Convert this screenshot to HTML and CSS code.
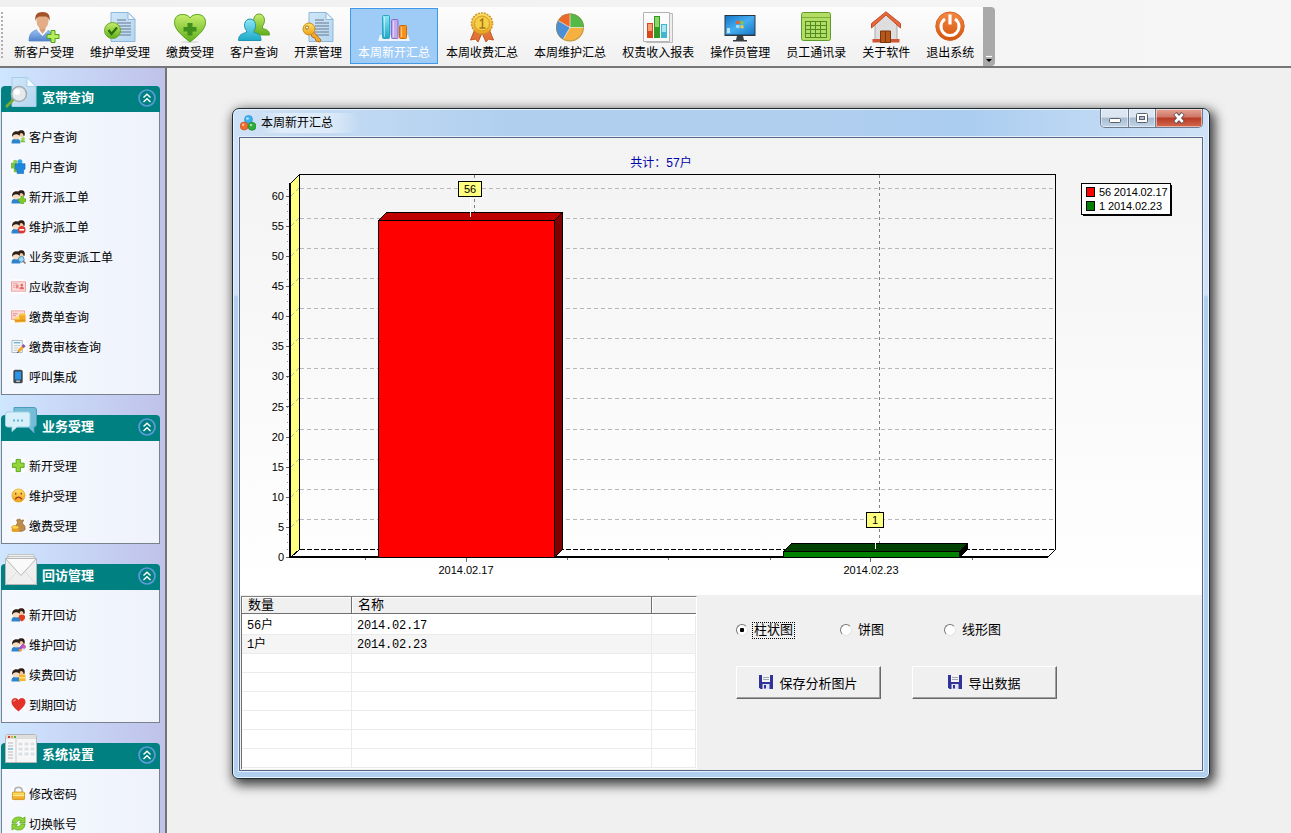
FILE: index.html
```html
<!DOCTYPE html>
<html lang="zh-CN">
<head>
<meta charset="utf-8">
<title>本周新开汇总</title>
<link rel="stylesheet" href="styles.css">
</head>
<body>
<svg class="defs" width="0" height="0" aria-hidden="true">
  <defs>
    <linearGradient id="gBlue" x1="0" y1="0" x2="0" y2="1"><stop offset="0" stop-color="#9ac0f0"/><stop offset="1" stop-color="#4f82cc"/></linearGradient>
    <linearGradient id="gGreen" x1="0" y1="0" x2="0" y2="1"><stop offset="0" stop-color="#c6ee6c"/><stop offset="1" stop-color="#5fae1c"/></linearGradient>
    <linearGradient id="gCyan" x1="0" y1="0" x2="0" y2="1"><stop offset="0" stop-color="#8ee6f6"/><stop offset="1" stop-color="#1ca9c8"/></linearGradient>
    <linearGradient id="gGold" x1="0" y1="0" x2="0" y2="1"><stop offset="0" stop-color="#ffe46a"/><stop offset="1" stop-color="#efa01a"/></linearGradient>
    <linearGradient id="gOrange" x1="0" y1="0" x2="0" y2="1"><stop offset="0" stop-color="#f58a45"/><stop offset="1" stop-color="#d4530b"/></linearGradient>
    <linearGradient id="gPaper" x1="0" y1="0" x2="1" y2="1"><stop offset="0" stop-color="#cfe6f8"/><stop offset="1" stop-color="#b4d6f0"/></linearGradient>
    <linearGradient id="gScreen" x1="0" y1="0" x2="1" y2="1"><stop offset="0" stop-color="#1576c8"/><stop offset=".5" stop-color="#46aef0"/><stop offset="1" stop-color="#1576c8"/></linearGradient>
    <symbol id="doc" viewBox="0 0 32 32">
      <path d="M7 1.500h17l7 7v22H7z" fill="url(#gPaper)" stroke="#8fb7dc"/>
      <path d="M24 1.500v7h7z" fill="#f2f8fd" stroke="#8fb7dc"/>
      <path d="M13 9h9M13 12h14M13 15h14M13 18h14M13 21h14M13 24h14" stroke="#8799ae" stroke-width="1.300"/>
    </symbol>
    <symbol id="people" viewBox="0 0 16 16">
      <circle cx="10.800" cy="5.300" r="3.200" fill="#f0c9a2"/>
      <path d="M7 7c-.5-4 1.500-6 4-5.700 2.800-.4 4.300 2 3.500 5.700l-1 1c0-2-.6-3.200-2.500-3.700C10 4.600 8.500 5 7 7z" fill="#2c1d17"/>
      <path d="M.5 15.500c0-4 1.500-5 4.700-5s4.800 1 4.800 5z" fill="#2e83cf"/>
      <path d="M10 14.500c0-2-.5-3.500-1.500-4.500 2.500-1.200 6.500-.5 7 4.500z" fill="#d8e4f0"/>
      <circle cx="5.500" cy="7.500" r="3.700" fill="#f7dcc0"/>
      <path d="M1.300 8.500C.7 5 2.500 2.500 5.800 2.500c3 0 4.200 2 3.600 4.800C7.600 6 6 5.500 4.500 5.800 2.600 6 2.200 6.800 1.300 8.500z" fill="#2c1d17"/>
    </symbol>
    <symbol id="chev" viewBox="0 0 18 18">
      <circle cx="9" cy="9" r="8" fill="none" stroke="#5a9bd8" stroke-width="1.700"/>
      <path d="M5.500 8.500L9 5.200l3.500 3.300M5.500 13L9 9.700l3.500 3.300" fill="none" stroke="#fff" stroke-width="1.400"/>
    </symbol>
    <symbol id="disk" viewBox="0 0 14 14">
      <path d="M0 0h14v14H1.500L0 12.500z" fill="#32329b"/>
      <path d="M3 0h8v7H3z" fill="#f3f3f3"/><path d="M4 2.500h6M4 4.500h6" stroke="#9ea6b0"/>
      <path d="M3.500 9h7v5h-7z" fill="#dfe3ef"/><path d="M5 10h2v3.500H5z" fill="#32329b"/>
    </symbol>
  </defs>
</svg>

<header class="topbar">
  <nav class="toolbar">
    <span class="grip"></span>
    <a class="tool"><svg viewBox="0 0 32 32">
      <path d="M1 30c0-7 3-10 8-11h9c5 1 7 4 7 11z" fill="url(#gBlue)" stroke="#5a87c4" stroke-width=".8"/>
      <path d="M9 19l5.500 6 5.500-6-2-3h-7z" fill="#fff"/><path d="M11.500 14h6v5l-3 4-3-4z" fill="#d9a07a"/>
      <ellipse cx="14.500" cy="10" rx="6" ry="8" fill="#e3ad88"/>
      <path d="M7.500 10C6.500 4 9 1 14.500 1s8 3 7 9c-1-3-2-4-3.500-4.500h-7C9 6 8 8 7.500 10z" fill="#a3512a"/>
      <path d="M23 19.500h4v4h4v4h-4v4h-4v-4h-4v-4h4z" fill="#b7ec5c" stroke="#4da31b"/>
    </svg>新客户受理</a>
    <a class="tool"><svg viewBox="0 0 32 32"><use href="#doc"/><circle cx="8.500" cy="19.500" r="8" fill="url(#gGreen)" stroke="#6aa82a"/><path d="M4.500 19l3 4 5.500-6.500" fill="none" stroke="#2d6d0c" stroke-width="2.200"/></svg>维护单受理</a>
    <a class="tool"><svg viewBox="0 0 32 32"><ellipse cx="16" cy="31" rx="9" ry="1" fill="#ddd"/><path d="M16 31C7 24 .5 18 .5 11.500.5 6 4 3.500 8.500 3.500c3.500 0 6 1 7.500 3.500 1.500-2.500 4-3.500 7.500-3.500 4.500 0 8 2.500 8 8C31.500 18 25 24 16 31z" fill="url(#gGreen)" stroke="#59a51d"/><path d="M13.500 12h5v4h4v4.500h-4v4h-5v-4h-4V16h4z" fill="#3f8f1b"/></svg>缴费受理</a>
    <a class="tool"><svg viewBox="0 0 32 32"><path d="M13 24c0-5 3-6 5-7-4-5-3-14 3-14s7 8 3.500 12v2.500c4 1 7 2 7 6.500z" fill="url(#gGreen)" stroke="#62a128"/><path d="M.5 29.500c0-6 4-7 8-8v-2C5 16 6 8 12 8s7 8 4 11.500v2c4 1 7 2 7 8z" fill="url(#gCyan)" stroke="#2494b4"/></svg>客户查询</a>
    <a class="tool"><svg viewBox="0 0 32 32"><use href="#doc"/><path d="M9 18l10 11-1 2-4-1-1-3-3-1-1-3-4-3z" fill="#f2a72e" stroke="#b9741a"/><circle cx="7" cy="18" r="6" fill="url(#gGold)" stroke="#c98a20"/><circle cx="5" cy="16.500" r="1.600" fill="#fff" stroke="#a86b16"/></svg>开票管理</a>
    <a class="tool tool-active"><svg viewBox="0 0 32 32"><path d="M2 24l-2 6h32l-2-6z" fill="#eef3f8"/><rect x="4.500" y="4.500" width="7" height="23" rx="1" fill="url(#gCyan)" stroke="#2fa5bd"/><rect x="13.500" y="8.500" width="6.500" height="19" rx="1" fill="#c3a8ec" stroke="#8c6cc8"/><rect x="21.500" y="14.500" width="7" height="13" rx="1" fill="#f8921c" stroke="#cc6a08"/><path d="M6.500 6v20M15.500 10v16M23.500 16v10" stroke="#fff" stroke-opacity=".5"/></svg>本周新开汇总</a>
    <a class="tool"><svg viewBox="0 0 32 32"><path d="M9 18L4.500 29l5-1 2.500 3 4-9 4 9 2.500-3 5 1L23 18z" fill="#e2713a" stroke="#c05522"/><circle cx="16" cy="12.500" r="10.500" fill="url(#gGold)" stroke="#c9962a" stroke-width="1.600" stroke-dasharray="2 1"/><circle cx="16" cy="12.500" r="7.500" fill="#f5cf45" stroke="#d19a22"/><path d="M14 10l2.500-2v9M13.500 17h6" fill="none" stroke="#a5741a" stroke-width="1.500"/></svg>本周收费汇总</a>
    <a class="tool"><svg viewBox="0 0 32 32"><circle cx="16" cy="16.500" r="14" fill="#f5b040"/><path d="M16 16.500L9 28.600A14 14 0 0 1 4 9.500z" fill="#4a8fd8"/><path d="M16 16.500L4 9.500A14 14 0 0 1 16 2.500z" fill="#ef6a2a"/><path d="M16 16.500v-14a14 14 0 0 1 14 14z" fill="#55b948"/><path d="M16 2.500v14h14M16 16.500L4 9.500M16 16.500L9 28.600" fill="none" stroke="#fff" stroke-opacity=".6"/><circle cx="16" cy="16.500" r="13.500" fill="none" stroke="#8a8a60" stroke-opacity=".6"/></svg>本周维护汇总</a>
    <a class="tool"><svg viewBox="0 0 32 32"><path d="M4.500 2.500h26v29h-26z" fill="#eee" stroke="#bbb"/><path d="M1.500 1.500h26v29h-26z" fill="#fbfbfb" stroke="#b4b4b4"/><rect x="5" y="12" width="6" height="15" fill="#d8481c"/><rect x="6" y="13" width="4" height="7" fill="#f4a074"/><rect x="12" y="5" width="6" height="22" fill="#319a23"/><rect x="13" y="6" width="4" height="10" fill="#8fd56c"/><rect x="19" y="13" width="6" height="14" fill="#3fb8cf"/><rect x="20" y="14" width="4" height="7" fill="#a8e6f0"/></svg>权责收入报表</a>
    <a class="tool"><svg viewBox="0 0 32 32"><path d="M13 25h6l1 4h3v1.500H9V29h3z" fill="#3a3f44"/><rect x=".5" y="4" width="31" height="21" fill="#283844"/><rect x="1.500" y="5" width="29" height="18.500" fill="url(#gScreen)"/><path d="M12 10.500l3.500-1V13H12z" fill="#f0602c"/><path d="M16.500 9.500l3 1v3l-3-.5z" fill="#8ac43c"/><path d="M12 14h3.500v3.500l-3.500-1z" fill="#a5dcff"/><path d="M16.500 14l3 .5v3l-3-.5z" fill="#f8d030"/><path d="M3 17h3v5H3z" fill="#b8e4f8"/></svg>操作员管理</a>
    <a class="tool"><svg viewBox="0 0 32 32"><rect x="1.500" y="1.500" width="29" height="28" rx="2" fill="#b2dc64" stroke="#5d9c26"/><path d="M2 6.500h28" stroke="#78b23a"/><path d="M5 10.500h22M5 14.500h22M5 18.500h22M5 22.500h22M5 26.500h22M5.500 10v17M10.500 10v17M15.500 10v17M20.500 10v17M26.500 10v17" stroke="#4c8a22"/></svg>员工通讯录</a>
    <a class="tool"><svg viewBox="0 0 32 32"><path d="M5 13L16 3l11 11v15H5z" fill="#dedede" stroke="#aaa"/><path d="M2.500 28h27v3.500h-27z" fill="#cf5634"/><path d="M10.500 20h10v11.500h-10z" fill="#b5561b" stroke="#7c350c"/><path d="M15.500 20v11" stroke="#7c350c"/><path d="M1.500 17L16 4l14.500 13v-4.500L16 .8 1.500 12.500z" fill="#e8683a" stroke="#c04c28"/></svg>关于软件</a>
    <a class="tool"><svg viewBox="0 0 32 32"><circle cx="16" cy="15.200" r="14.200" fill="url(#gOrange)" stroke="#d8631f"/><path d="M11 8A9 9 0 1 0 21 8" fill="none" stroke="#fff" stroke-width="3"/><path d="M16 3.500v10" stroke="#fff" stroke-width="3.200"/></svg>退出系统</a>
    <span class="overflow"><svg viewBox="0 0 8 8"><path d="M1 1.500h6" stroke="#fff" stroke-width="1.200"/><path d="M1 4h6L4 7z" fill="#000"/></svg></span>
  </nav>
</header>

<div class="workspace">
  <aside class="sidebar">
    <section class="group">
      <h2 class="group-head"><svg class="group-icon" viewBox="0 0 32 32"><path d="M7 1.500h15l9 9v20H7z" fill="url(#gPaper)" stroke="#a8cdea"/><path d="M22 1.500v9h9z" fill="#f4fafe" stroke="#a8cdea"/><path d="M9 23L1 31" stroke="#7bab2c" stroke-width="2.600"/><circle cx="14" cy="18" r="7.500" fill="#e6eaee" stroke="#a7adb2" stroke-width="1.600"/><circle cx="12" cy="16" r="3" fill="#fff"/></svg>宽带查询<svg class="chev"><use href="#chev"/></svg></h2>
      <ul class="group-body">
        <li><svg viewBox="0 0 16 16"><use href="#people"/><path d="M10 14c0-3 4-3 5.500 0z" fill="#7cc332"/><circle cx="12.800" cy="10.500" r="2" fill="#9bd84c"/></svg>客户查询</li>
        <li><svg viewBox="0 0 16 16"><path d="M0 4h6l1 10H3v-4H0z" fill="#79c33c"/><circle cx="4.500" cy="3" r="2.300" fill="#8fd14e"/><circle cx="9.500" cy="3" r="2.700" fill="#35a4ee"/><path d="M4.500 5H15v6h-1.500v4.500H6.500V11h-2z" fill="#1e88de" stroke="#1266b0" stroke-width=".6"/></svg>用户查询</li>
        <li><svg viewBox="0 0 16 16"><use href="#people"/><path d="M10.500 8h3v2.500H16v3h-2.500V16h-3v-2.500H8v-3h2.500z" fill="#84cc28" stroke="#4f9c14" stroke-width=".6"/></svg>新开派工单</li>
        <li><svg viewBox="0 0 16 16"><use href="#people"/><circle cx="11.500" cy="11.500" r="4" fill="#e0382c"/><path d="M9 11.500h5" stroke="#fff" stroke-width="1.700"/></svg>维护派工单</li>
        <li><svg viewBox="0 0 16 16"><use href="#people"/><path d="M13 13l2.500 2.500" stroke="#8a6a40" stroke-width="1.500"/><circle cx="11" cy="11" r="3" fill="#9bd8f6" stroke="#4b87b0"/></svg>业务变更派工单</li>
        <li><svg viewBox="0 0 16 16"><rect x=".5" y="3" width="15" height="10" fill="#fbdcdc" stroke="#eba3a0"/><rect x="5" y="6" width="3" height="4" fill="#e88684"/><circle cx="11.500" cy="6.500" r="1.500" fill="#e26a68"/><path d="M9 11c0-4 5-4 5 0z" fill="#e26a68"/><path d="M2 5h5M2 7h2M2 9h2" stroke="#e9a2a0"/></svg>应收款查询</li>
        <li><svg viewBox="0 0 16 16"><rect x=".5" y="2" width="14" height="9" fill="#fbdcdc" stroke="#eba3a0"/><path d="M2 5h5M2 7h3" stroke="#e08886"/><ellipse cx="12" cy="6.500" rx="3.500" ry="2" fill="#fbc740"/><path d="M8.500 7h7v7h-7zM4 10h5v4.500H4z" fill="#f3a925"/><ellipse cx="6.500" cy="10" rx="3" ry="1.500" fill="#ffd85e"/><path d="M4 12h11.500" stroke="#c87c12" stroke-width=".7"/></svg>缴费单查询</li>
        <li><svg viewBox="0 0 16 16"><path d="M1 1.500h11v13H1z" fill="#f5f8fb" stroke="#a9b2bc"/><path d="M3 4h7" stroke="#5aabd2" stroke-width="1.300"/><path d="M3 7h7M3 9.500h5M3 12h4" stroke="#bcc6cf"/><path d="M8 13l5-5" stroke="#f6a623" stroke-width="3"/><path d="M12.500 8.500l2-2" stroke="#8a4fc0" stroke-width="3.200"/><path d="M6.500 14.500l2-1" stroke="#333"/></svg>缴费审核查询</li>
        <li><svg viewBox="0 0 16 16"><rect x="2.500" y=".8" width="10" height="14.400" rx="2" fill="#3e4c58"/><rect x="4.300" y="2.800" width="6.400" height="8.400" fill="#2a94e6"/><path d="M5.500 13h4" stroke="#cdd6de" stroke-width="1.400"/></svg>呼叫集成</li>
      </ul>
    </section>
    <section class="group">
      <h2 class="group-head"><svg class="group-icon" viewBox="0 0 32 32"><path d="M9 2.500h20q2.500 0 2.500 2.500v14q0 3-2.500 3v6l-6-6H12q-3 0-3-3V4z" fill="#74bdd9" stroke="#4c9dbd"/><path d="M3 7h20q2 0 2 2v11q0 2-2 2H12l-5 4.500V22H3q-2.500 0-2.500-2V9q0-2 2.500-2z" fill="#d8f0fa" stroke="#a0d0e4"/><path d="M8 15.500h2M12 15.500h2M16 15.500h2" stroke="#68b4d4" stroke-width="2"/></svg>业务受理<svg class="chev"><use href="#chev"/></svg></h2>
      <ul class="group-body">
        <li><svg viewBox="0 0 16 16"><path d="M5.500 1.500h4.500v4h4v4.500h-4v4.500H5.500V10h-4V5.500h4z" fill="#94d63a" stroke="#56a41a"/></svg>新开受理</li>
        <li><svg viewBox="0 0 16 16"><circle cx="8" cy="8" r="7" fill="url(#gGold)" stroke="#dc981c" stroke-width=".7"/><path d="M5 5v2M11 5v2M4.500 12q3.500-4.500 7 0" fill="none" stroke="#a8361c" stroke-width="1.500"/></svg>维护受理</li>
        <li><svg viewBox="0 0 16 16"><path d="M7 5l-1-3 3-1 2 1.500L13.500 2 12 5.500q4 3 3 7-3 3-9 1-2-5 1-8.500z" fill="#c08c4c" stroke="#8c6330" stroke-width=".7"/><ellipse cx="4.500" cy="13" rx="4" ry="2" fill="#e9a21e"/><ellipse cx="4.500" cy="10" rx="4" ry="2" fill="#ffd34e" stroke="#c98a16" stroke-width=".7"/></svg>缴费受理</li>
      </ul>
    </section>
    <section class="group">
      <h2 class="group-head"><svg class="group-icon" viewBox="0 0 32 32"><path d="M3 .5h26v8H3zM2 2.500h28v8H2z" fill="#f2f2f2" stroke="#c4c4c4"/><path d="M.5 4.500h31v26H.500z" fill="#eeefee" stroke="#b6b6b6"/><path d="M.5 30.500L12 17.500M31.500 30.500L20 17.500" stroke="#ddd"/><path d="M.5 4.500l15.500 17 15.500-17z" fill="#fafafa" stroke="#b6b6b6"/></svg>回访管理<svg class="chev"><use href="#chev"/></svg></h2>
      <ul class="group-body">
        <li><svg viewBox="0 0 16 16"><use href="#people"/><path d="M11.500 15.500C7.500 13 7 7.500 11.500 8.500c4.500-1.500 5 4.500 0 7z" fill="#e23c1c"/></svg>新开回访</li>
        <li><svg viewBox="0 0 16 16"><use href="#people"/><path d="M9 13l5-5" stroke="#9c4cc0" stroke-width="3"/><circle cx="14" cy="10.500" r="2" fill="#d058b4"/><circle cx="10" cy="14" r="1.500" fill="#f09a28"/></svg>维护回访</li>
        <li><svg viewBox="0 0 16 16"><use href="#people"/><rect x="8.500" y="8" width="7" height="7" fill="#f7b52c"/><path d="M8.500 11.500h7" stroke="#fff0b0"/></svg>续费回访</li>
        <li><svg viewBox="0 0 16 16"><path d="M8 15.500C3 11 .5 8.500.5 5 .5 2.500 2.500 1 4.500 1 6.200 1 7.400 2 8 3.400 8.600 2 9.800 1 11.500 1c2 0 4 1.500 4 4 0 3.500-2.500 6-7.500 10.500z" fill="#e3322a"/><path d="M3 5q0-2 2-2" stroke="#fba39c" fill="none" stroke-width="1.200"/></svg>到期回访</li>
      </ul>
    </section>
    <section class="group">
      <h2 class="group-head"><svg class="group-icon" viewBox="0 0 32 32"><path d="M.5 3.500q0-2 2-2h27q2 0 2 2v26H.5z" fill="#f6f6f6" stroke="#b6b6b6"/><path d="M1 2h30v4H1z" fill="#dedede"/><path d="M3 4h2" stroke="#d43c2c" stroke-width="2"/><path d="M6 4h2" stroke="#e8a528" stroke-width="2"/><path d="M9 4h2" stroke="#5cb43c" stroke-width="2"/><path d="M11 6v23" stroke="#ccc"/><path d="M3 10h5M3 13h5M3 19h5M3 22h5M3 25h5" stroke="#b4bcc2"/><path d="M3 16h5" stroke="#3a9cc8"/><path d="M13 9h5v4h-5zM19 9h5v4h-5zM25 9h5v4h-5zM13 14h5v4h-5zM19 14h5v4h-5zM25 14h5v4h-5zM13 19h5v4h-5zM19 19h5v4h-5zM25 19h5v4h-5z" fill="#dce0e4" stroke="#fff" stroke-width=".8"/></svg>系统设置<svg class="chev"><use href="#chev"/></svg></h2>
      <ul class="group-body">
        <li><svg viewBox="0 0 16 16"><path d="M4 8V5q0-3.500 4-3.500T12 5v3" fill="none" stroke="#b4b4b4" stroke-width="1.700"/><rect x="1.500" y="6.500" width="13" height="8" rx="1" fill="url(#gGold)" stroke="#d0931c"/><path d="M2 10h12" stroke="#fff1a8"/></svg>修改密码</li>
        <li><svg viewBox="0 0 16 16"><path d="M1 7.500Q1.500 1 8 1q3 0 4.500 1.500L15 1v6.500H9L11 5Q7.500 3.500 5 7.500z" fill="#8ed436" stroke="#4c9c18" stroke-width=".7"/><path d="M15 8.500Q14.500 15 8 15q-3 0-4.500-1.500L1 15V8.500h6L5 11q3.500 1.500 6-2.500z" fill="#8ed436" stroke="#4c9c18" stroke-width=".7"/></svg>切换帐号</li>
      </ul>
    </section>
  </aside>

  <main class="desktop">
    <div class="window">
      <div class="titlebar">
        <svg class="app-icon" viewBox="0 0 16 16"><circle cx="8.500" cy="4.500" r="4" fill="#3fb0ee" stroke="#1c86c8" stroke-width=".6"/><circle cx="4.200" cy="11" r="4" fill="#ee6c34" stroke="#c04818" stroke-width=".6"/><circle cx="12" cy="11.300" r="4" fill="#2fae3c" stroke="#147c20" stroke-width=".6"/><circle cx="7.500" cy="3.500" r="1.300" fill="#b8e6fb"/><circle cx="3.200" cy="9.800" r="1.200" fill="#fcc0a0"/><circle cx="11" cy="10" r="1.200" fill="#a5e2a4"/></svg>
        <span class="title">本周新开汇总</span>
        <div class="controls">
          <span class="ctl ctl-min"><svg viewBox="0 0 14 12"><rect x="1.500" y="6.500" width="11" height="4" rx="1" fill="#fff" stroke="#59616e"/></svg></span>
          <span class="ctl ctl-max"><svg viewBox="0 0 14 12"><rect x="1.500" y="1.500" width="11" height="9" rx="1" fill="#fff" stroke="#59616e"/><rect x="4.500" y="4.500" width="5" height="3" fill="#aebccf" stroke="#59616e"/></svg></span>
          <span class="ctl ctl-close"><svg viewBox="0 0 14 12"><path d="M3 1.500l8 9M11 1.500l-8 9" stroke="#5c4a50" stroke-width="4.500"/><path d="M3.300 2l7.400 8M10.700 2l-7.400 8" stroke="#fff" stroke-width="2.600"/></svg></span>
        </div>
      </div>
      <div class="client">
        <svg class="chart" viewBox="240 138 962 457">
          <text x="661" y="167" class="chart-title" text-anchor="middle">共计：57户</text>
          <!-- walls and floor -->
          <path d="M290 557L299.500 549.500H1055.500L1048 557z" fill="#fff"/>
          <path d="M290.500 183.500L299.500 174.500V549.500L290.500 557.500z" fill="#ffff80" stroke="#000"/>
          <path d="M299.500 174.500H1055.500V549.500L1048 557" fill="none" stroke="#000"/>
          <path d="M300 549.500H1055" stroke="#000" stroke-dasharray="5 2"/>
          <path class="grid" d="M300 188.500H1055M300 218.500H1055M300 248.500H1055M300 278.500H1055M300 308.500H1055M300 338.500H1055M300 368.500H1055M300 398.500H1055M300 429.500H1055M300 459.500H1055M300 489.500H1055M300 519.500H1055"/>
          <path class="grid" d="M291 196l8-8M291 226l8-8M291 256l8-8M291 286l8-8M291 316l8-8M291 346l8-8M291 376l8-8M291 406l8-8M291 437l8-8M291 467l8-8M291 497l8-8M291 527l8-8"/>
          <path d="M474.500 175V549M879.500 175V549" stroke="#808080" stroke-dasharray="3 3"/>
          <!-- axes -->
          <path d="M290 183V558M289 557H1048" stroke="#000" stroke-width="2"/>
          <path d="M287.500 188.500V557" stroke="#909090" stroke-dasharray="1 6.520"/>
          <path d="M286 196.500h3M286 226.500h3M286 256.500h3M286 286.500h3M286 316.500h3M286 346.500h3M286 376.500h3M286 406.500h3M286 437.500h3M286 467.500h3M286 497.500h3M286 527.500h3M286 557.500h3" stroke="#606060"/>
          <path d="M466.500 558v4M870.500 558v4M365.500 558v2M567.500 558v2M668.500 558v2M770.500 558v2M972.500 558v2" stroke="#707070"/>
          <g class="axis" text-anchor="end">
            <text x="284" y="200">60</text><text x="284" y="230">55</text><text x="284" y="260">50</text><text x="284" y="290">45</text><text x="284" y="320">40</text><text x="284" y="350">35</text><text x="284" y="380">30</text><text x="284" y="411">25</text><text x="284" y="441">20</text><text x="284" y="471">15</text><text x="284" y="501">10</text><text x="284" y="531">5</text><text x="284" y="561">0</text>
          </g>
          <!-- bars -->
          <g stroke="#000">
            <path d="M378.500 220.500l8-8H562.500l-8 8z" fill="#bf0000"/>
            <path d="M554.500 220.500l8-8V549.500l-8 8z" fill="#800000"/>
            <path d="M378.500 220.500H554.500V557.500H378.500z" fill="#f00"/>
            <path d="M783.500 551.500l8-8H967.500l-8 8z" fill="#004000"/>
            <path d="M959.500 551.500l8-8v6l-8 8z" fill="#000"/>
            <path d="M783.500 551.500H959.500V557.500H783.500z" fill="#008000"/>
          </g>
          <path d="M470.500 197V217M875.500 543V549" stroke="#fff"/>
          <g fill="#ffff80" stroke="#000"><rect x="458.500" y="181.500" width="23" height="15"/><rect x="866.500" y="512.500" width="17" height="15"/></g>
          <g class="axis" text-anchor="middle">
            <text x="470" y="193">56</text><text x="875" y="524">1</text>
            <text x="466" y="574">2014.02.17</text><text x="871" y="574">2014.02.23</text>
          </g>
          <!-- legend -->
          <rect x="1083" y="185" width="89" height="31" fill="#000"/>
          <rect x="1081.500" y="183.500" width="89" height="31" fill="#fff" stroke="#000"/>
          <rect x="1086.500" y="187.500" width="8" height="9" fill="#f00" stroke="#000"/>
          <rect x="1086.500" y="201.500" width="8" height="9" fill="#008000" stroke="#000"/>
          <text class="axis" x="1099" y="196" textLength="68.500">56 2014.02.17</text>
          <text class="axis" x="1099" y="210" textLength="63">1 2014.02.23</text>
        </svg>
        <div class="lower">
          <div class="table">
            <div class="thead"><span>数量</span><span>名称</span><span></span></div>
            <div class="trow"><span>56户</span><span>2014.02.17</span><span></span></div>
            <div class="trow trow-alt"><span>1户</span><span>2014.02.23</span><span></span></div>
            <div class="trow"><span></span><span></span><span></span></div>
            <div class="trow"><span></span><span></span><span></span></div>
            <div class="trow"><span></span><span></span><span></span></div>
            <div class="trow"><span></span><span></span><span></span></div>
            <div class="trow"><span></span><span></span><span></span></div>
            <div class="trow"><span></span><span></span><span></span></div>
          </div>
          <div class="options">
            <div class="radios">
              <label class="radio radio-on"><i></i><span>柱状图</span></label>
              <label class="radio"><i></i><span>饼图</span></label>
              <label class="radio"><i></i><span>线形图</span></label>
            </div>
            <div class="buttons">
              <button class="btn"><svg><use href="#disk"/></svg>保存分析图片</button>
              <button class="btn"><svg><use href="#disk"/></svg>导出数据</button>
            </div>
          </div>
        </div>
      </div>
    </div>
  </main>
</div>
</body>
</html>
```
FILE: styles.css
```css
* { box-sizing: border-box; }
body {
  margin: 0;
  width: 1291px;
  height: 833px;
  overflow: hidden;
  display: flex;
  flex-direction: column;
  background: #f0f0f0;
  color: #000;
  font: 12px "Liberation Sans", "Noto Sans CJK SC", sans-serif;
}
.defs { position: absolute; }

/* top toolbar */
.topbar {
  height: 68px;
  flex: none;
  padding-top: 7px;
  background: linear-gradient(90deg, #f0f0f0, #f6f6f6);
  border-bottom: 2px solid #767676;
}
.toolbar {
  display: flex;
  width: 995px;
  height: 59px;
  padding-top: 1px;
  background: linear-gradient(#fdfdfd, #f0f0f0);
  border-radius: 0 4px 4px 0;
}
.grip {
  width: 2px;
  height: 48px;
  margin: 4px 3px 0 1px;
  background: repeating-linear-gradient(#b0b0b0 0 2px, transparent 2px 4px);
}
.tool {
  flex: none;
  height: 56px;
  padding: 2px 7px 0;
  border: 1px solid transparent;
  display: flex;
  flex-direction: column;
  align-items: center;
  line-height: 20px;
  white-space: nowrap;
}
.tool svg { width: 32px; height: 32px; }
.tool-active { background: #9fccf7; border-color: #3f98e8; color: #fff; }
.overflow {
  width: 12px;
  height: 59px;
  margin: -1px 0 0 auto;
  background: #a9a9a9;
  border-radius: 0 4px 4px 0;
  display: flex;
  align-items: flex-end;
  justify-content: center;
  padding-bottom: 3px;
}
.overflow svg { width: 8px; height: 8px; }

/* sidebar */
.workspace { flex: 1; display: flex; min-height: 0; }
.sidebar {
  width: 167px;
  flex: none;
  padding: 18px 5px 0 1px;
  border-right: 2px solid #747474;
  background: linear-gradient(90deg, #cfe6ff, #bfc2ea);
  display: flex;
  flex-direction: column;
  gap: 20px;
  overflow: hidden;
}
.group { flex: none; width: 159px; }
.group-head {
  position: relative;
  margin: 0;
  height: 26px;
  padding: 0 4px 2px 41px;
  display: flex;
  align-items: center;
  justify-content: space-between;
  background: #008080;
  border-radius: 4px 4px 0 0;
  color: #fff;
  font-size: 13px;
  line-height: 18px;
  font-weight: bold;
}
.group-icon { position: absolute; left: 4px; top: -10px; width: 32px; height: 32px; }
.chev { width: 18px; height: 18px; }
.group-body {
  list-style: none;
  margin: 0;
  padding: 10px 0 2px 9px;
  border: 1px solid #77828c;
  border-top: 0;
  background: linear-gradient(90deg, #f5f9ff, #eff2fb);
}
.group-body li {
  height: 30px;
  padding-bottom: 2px;
  display: flex;
  align-items: center;
  gap: 3px;
}
.group-body svg { width: 15px; height: 15px; background: #fafcff; }

/* MDI area and its child window */
.desktop { position: relative; flex: 1; background: #f0f0f0; }
.window {
  position: absolute;
  left: 65px;
  top: 40px;
  width: 978px;
  height: 671px;
  padding: 0 6px 7px;
  border: 1px solid #1d2b36;
  border-radius: 7px 7px 6px 6px;
  background: linear-gradient(90deg, #cfe1f5, #b0cfef 28%, #b0cfef 60%, #abcdf0 75%, #cfe2f7) top / 100% 29px no-repeat,
    linear-gradient(#d0e2f6 186px, #b1cfee 188px);
  box-shadow: inset 0 0 0 1px #eaf4fd, 3px 4px 12px 2px rgba(0, 0, 0, .75);
}
.titlebar { height: 28px; padding-left: 1px; display: flex; align-items: flex-start; }
.app-icon { width: 16px; height: 16px; margin: 6px 5px 0 0; }
.title {
  margin-top: 4px;
  padding-right: 26px;
  line-height: 20px;
  background: linear-gradient(90deg, rgba(235, 244, 253, 0), rgba(235, 244, 253, .65) 20%, rgba(235, 244, 253, .65) 70%, rgba(235, 244, 253, 0));
}
.controls {
  display: flex;
  height: 19px;
  margin-left: auto;
  border: 1px solid #6b7a90;
  border-top: 0;
  border-radius: 0 0 5px 5px;
  overflow: hidden;
}
.ctl {
  width: 27px;
  display: flex;
  align-items: center;
  justify-content: center;
  background: linear-gradient(#dbe6f2 45%, #a9bbd0 50%, #c3d5e8);
  box-shadow: inset 0 0 0 1px rgba(255, 255, 255, .5);
}
.ctl svg { width: 14px; height: 12px; }
.ctl-max, .ctl-close { border-left: 1px solid #6b7a90; }
.ctl-close {
  width: 47px;
  background: linear-gradient(#e3a596 0, #cf7565 45%, #b63a24 50%, #d4694e);
}
.client {
  width: 964px;
  height: 634px;
  border: 1px solid #56688a;
  background: #f0f0f0;
  display: flex;
  flex-direction: column;
  box-shadow: 0 0 0 1px #e6f0fb;
}
.chart {
  display: block;
  width: 962px;
  height: 457px;
  flex: none;
  background: linear-gradient(#f3f3f3, #fff);
  shape-rendering: crispEdges;
}
.grid { fill: none; stroke: #b8b8b8; stroke-dasharray: 4 3; }
.axis { font: 11px "Liberation Sans", sans-serif; }
.chart-title { font: 12px "Liberation Sans", "Noto Sans CJK SC", sans-serif; fill: #0000a8; }

/* data table */
.lower { flex: 1; display: flex; min-height: 0; }
.table {
  width: 456px;
  flex: none;
  margin: 1px 0 1px 1px;
  border-top: 1px solid #808080;
  border-left: 1px solid #707070;
  border-right: 1px solid #fff;
  background: #fff;
  overflow: hidden;
  font: 13px "Liberation Mono", "Noto Sans CJK SC", monospace;
}
.thead, .trow { display: grid; grid-template-columns: 110px 300px 1fr; }
.thead { height: 17px; line-height: 17px; background: #f0f0f0; border-bottom: 1px solid #707070; margin-bottom: 2px; }
.thead span { height: 16px; padding-left: 6px; border-right: 1px solid #707070; box-shadow: inset 1px 1px #fff; }
.thead span:last-child { border-right: 0; }
.trow {
  height: 19px;
  line-height: 20px;
  border-bottom: 1px solid #ebebeb;
  font-size: 12px;
  letter-spacing: -.2px;
}
.trow span { height: 18px; padding-left: 5px; border-right: 1px solid #ebebeb; }
.trow-alt { background: #f5f5f5; }

/* options */
.options { padding: 25px 0 0 39px; font-size: 13px; }
.radios { display: flex; height: 20px; align-items: center; }
.radio { width: 104px; display: flex; align-items: center; gap: 5px; }
.radio i {
  width: 12px;
  height: 12px;
  border-radius: 50%;
  border: 1px solid;
  border-color: #777 #e4e4e4 #e4e4e4 #777;
  background: #fff;
}
.radio-on i { background: radial-gradient(circle, #000 2px, #fff 2.500px); }
.radio span { height: 15px; line-height: 14px; padding: 0 1px; }
.radio-on span { outline: 1px dotted #000; }
.buttons { display: flex; gap: 31px; margin-top: 26px; }
.btn {
  width: 145px;
  height: 33px;
  padding: 0 0 1px;
  display: flex;
  align-items: center;
  justify-content: center;
  gap: 6px;
  background: #f0f0f0;
  border: 1px solid;
  border-color: #fff #696969 #696969 #fff;
  box-shadow: inset -1px -1px #a0a0a0;
  color: #000;
  font: 13px "Liberation Sans", "Noto Sans CJK SC", sans-serif;
}
.btn svg { width: 14px; height: 14px; }
```
